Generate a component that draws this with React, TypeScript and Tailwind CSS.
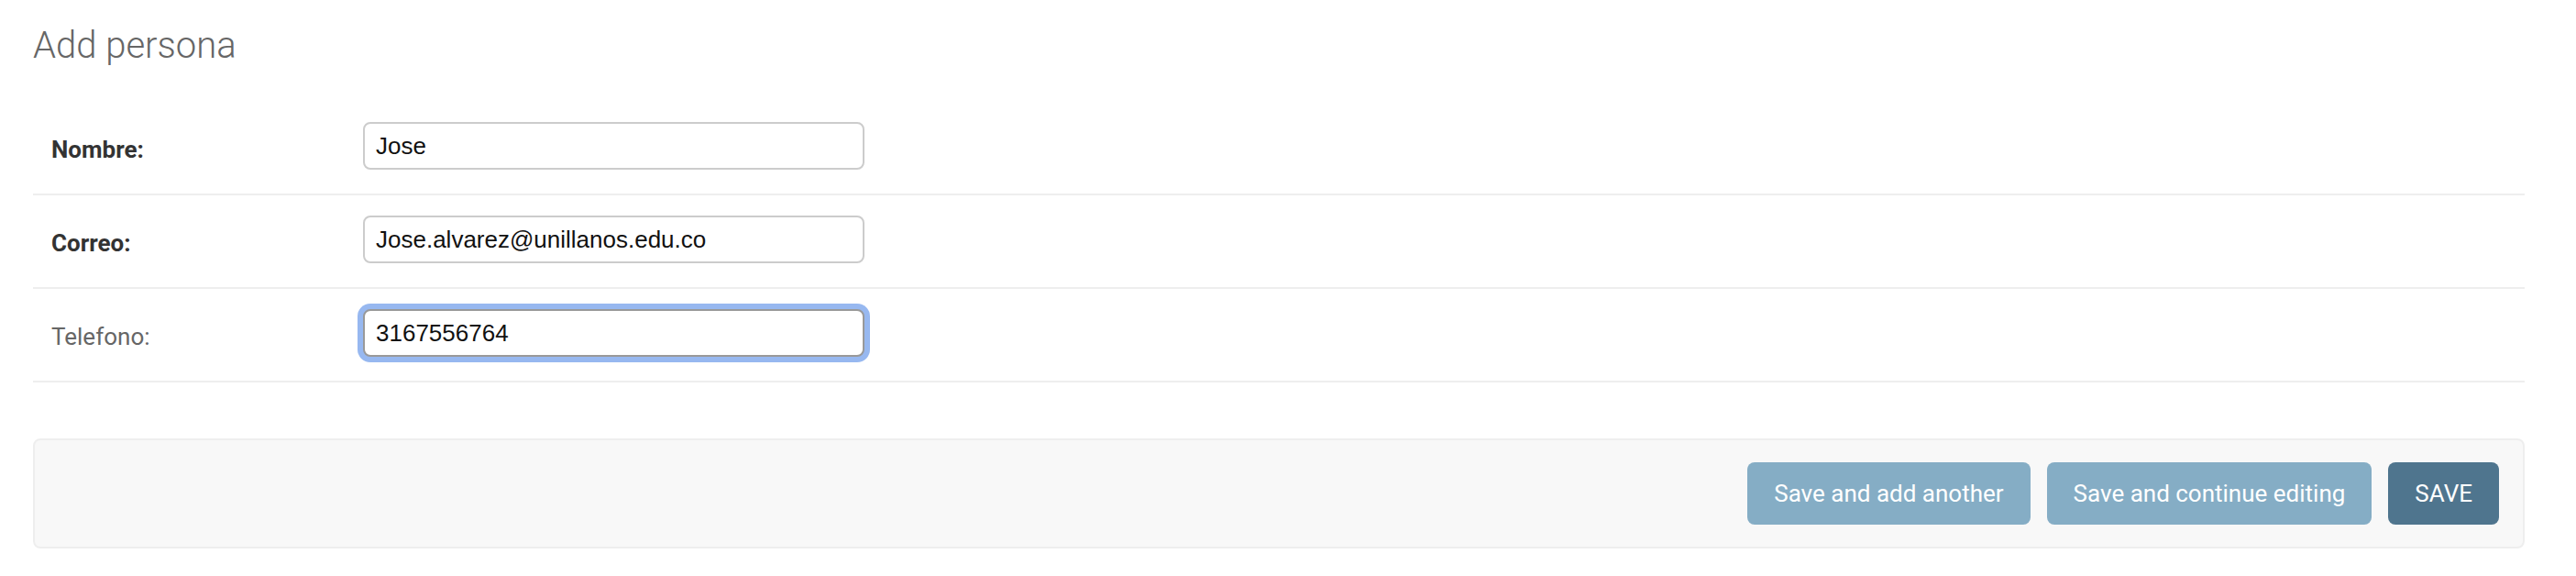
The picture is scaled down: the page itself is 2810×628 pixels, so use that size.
import React from "react";

type Field = {
  label: string;
  value: string;
  required: boolean;
  focused?: boolean;
};

const fields: Field[] = [
  { label: "Nombre:", value: "Jose", required: true },
  { label: "Correo:", value: "Jose.alvarez@unillanos.edu.co", required: true },
  { label: "Telefono:", value: "3167556764", required: false, focused: true },
];

function FormRow({ field }: { field: Field }) {
  return (
    <div className="flex items-start border-b-2 border-[#eeeeee] px-[20px] pt-[22px] pb-[26px]">
      <label
        className={
          field.required
            ? "mt-[15px] w-[340px] shrink-0 font-['Roboto',sans-serif] text-[26px] leading-[30px] font-bold text-[#333333]"
            : "mt-[15px] w-[340px] shrink-0 font-['Roboto',sans-serif] text-[26px] leading-[30px] font-normal text-[#666666]"
        }
      >
        {field.label}
      </label>
      <input
        type="text"
        readOnly
        value={field.value}
        className={
          field.focused
            ? "h-[52px] w-[547px] rounded-[8px] border-2 border-[#999999] bg-white px-[12px] font-['Liberation_Sans',Arial,sans-serif] text-[26px] text-[#111111] outline-none ring-[6px] ring-[#97b8f0]"
            : "h-[52px] w-[547px] rounded-[8px] border-2 border-[#cccccc] bg-white px-[12px] font-['Liberation_Sans',Arial,sans-serif] text-[26px] text-[#111111] outline-none"
        }
      />
    </div>
  );
}

export default function App() {
  return (
    <div className="h-[628px] w-[2810px] overflow-hidden bg-white pt-[26px] pl-[36px]">
      <h1 className="font-['Roboto',sans-serif] text-[40px] leading-[47px] font-light text-[#666666]">
        Add persona
      </h1>

      <div className="mt-[38px] w-[2718px]">
        {fields.map((f) => (
          <FormRow key={f.label} field={f} />
        ))}
      </div>

      <div className="mt-[61px] flex w-[2718px] justify-end gap-[18px] rounded-[8px] border-2 border-[#eeeeee] bg-[#f8f8f8] py-[24px] pr-[26px]">
        <button className="h-[68px] rounded-[8px] bg-[#85adc5] px-[29px] font-['Roboto',sans-serif] text-[26px] text-white">
          Save and add another
        </button>
        <button className="h-[68px] rounded-[8px] bg-[#85adc5] px-[29px] font-['Roboto',sans-serif] text-[26px] text-white">
          Save and continue editing
        </button>
        <button className="h-[68px] rounded-[8px] bg-[#4f758e] px-[29px] font-['Roboto',sans-serif] text-[26px] text-white uppercase">
          Save
        </button>
      </div>
    </div>
  );
}
